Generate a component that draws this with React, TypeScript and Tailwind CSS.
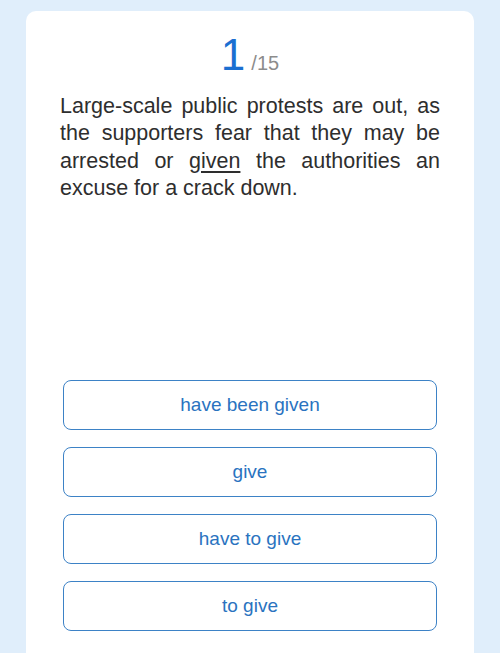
const options = ["have been given", "give", "have to give", "to give"];

export default function App() {
  return (
    <div
      className="min-h-[653px] bg-[#e0eefb] px-[26px] pt-[11px]"
      style={{ fontFamily: '"Liberation Sans", Arial, sans-serif' }}
    >
      <div className="min-h-[642px] rounded-t-[10px] bg-white px-[34px] pt-[20px]">
        {/* question counter */}
        <div className="flex items-baseline justify-center gap-[6px]">
          <span className="text-[44px] leading-[48px] text-[#1b6fd1]">1</span>
          <span className="text-[20px] text-[#8c8c8c]">/15</span>
        </div>

        <p className="mt-[14px] text-justify text-[21.5px] leading-[27.3px] text-[#2e2e2e]">
          Large-scale public protests are out, as the supporters fear that they
          may be arrested or <u className="underline-offset-[3px]">given</u> the
          authorities an excuse for a crack down.
        </p>

        {/* answer choices */}
        <div className="mt-[178px] flex flex-col gap-[17px] px-[3px]">
          {options.map((o) => (
            <button
              key={o}
              className="h-[50px] w-full rounded-[8px] border-[1.5px] border-[#3d82c6] bg-white text-[19px] text-[#2a73bf]"
            >
              {o}
            </button>
          ))}
        </div>
      </div>
    </div>
  );
}
